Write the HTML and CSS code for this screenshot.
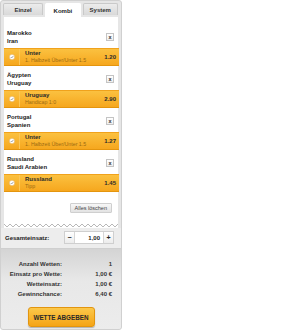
FILE: index.html
```html
<!DOCTYPE html>
<html lang="de">
<head>
<meta charset="utf-8">
<title>Wettschein</title>
<link rel="stylesheet" href="styles.css">
</head>
<body>
<div class="slip">
  <div class="tabs">
    <div class="tab tab-wide">Einzel</div>
    <div class="tab active">Kombi</div>
    <div class="tab">System</div>
  </div>
  <div class="content">
    <div class="match">
      <div class="teams"><div>Marokko</div><div>Iran</div></div>
      <span class="remove">x</span>
    </div>
    <div class="pick">
      <span class="check"><svg viewBox="0 0 8 8" width="6" height="6"><circle cx="4" cy="4" r="3.6" fill="#fff" stroke="#d9a040" stroke-width="0.6"/><path d="M2.3 4.1 L3.5 5.3 L5.8 2.7" fill="none" stroke="#777" stroke-width="0.9"/></svg></span>
      <div class="pick-info"><div class="pick-name">Unter</div><div class="pick-market">1. Halbzeit Über/Unter 1.5</div></div>
      <div class="odds">1.20</div>
    </div>
    <div class="match">
      <div class="teams"><div>Ägypten</div><div>Uruguay</div></div>
      <span class="remove">x</span>
    </div>
    <div class="pick">
      <span class="check"><svg viewBox="0 0 8 8" width="6" height="6"><circle cx="4" cy="4" r="3.6" fill="#fff" stroke="#d9a040" stroke-width="0.6"/><path d="M2.3 4.1 L3.5 5.3 L5.8 2.7" fill="none" stroke="#777" stroke-width="0.9"/></svg></span>
      <div class="pick-info"><div class="pick-name">Uruguay</div><div class="pick-market">Handicap 1:0</div></div>
      <div class="odds">2.90</div>
    </div>
    <div class="match">
      <div class="teams"><div>Portugal</div><div>Spanien</div></div>
      <span class="remove">x</span>
    </div>
    <div class="pick">
      <span class="check"><svg viewBox="0 0 8 8" width="6" height="6"><circle cx="4" cy="4" r="3.6" fill="#fff" stroke="#d9a040" stroke-width="0.6"/><path d="M2.3 4.1 L3.5 5.3 L5.8 2.7" fill="none" stroke="#777" stroke-width="0.9"/></svg></span>
      <div class="pick-info"><div class="pick-name">Unter</div><div class="pick-market">1. Halbzeit Über/Unter 1.5</div></div>
      <div class="odds">1.27</div>
    </div>
    <div class="match">
      <div class="teams"><div>Russland</div><div>Saudi Arabien</div></div>
      <span class="remove">x</span>
    </div>
    <div class="pick">
      <span class="check"><svg viewBox="0 0 8 8" width="6" height="6"><circle cx="4" cy="4" r="3.6" fill="#fff" stroke="#d9a040" stroke-width="0.6"/><path d="M2.3 4.1 L3.5 5.3 L5.8 2.7" fill="none" stroke="#777" stroke-width="0.9"/></svg></span>
      <div class="pick-info"><div class="pick-name">Russland</div><div class="pick-market">Tipp</div></div>
      <div class="odds">1.45</div>
    </div>
    <div class="actions"><span class="clear">Alles löschen</span></div>
  </div>
  <div class="zigzag"><svg viewBox="0 0 114 5" width="114" height="5" preserveAspectRatio="none"><path d="M0 1 L3 4 L6 1 L9 4 L12 1 L15 4 L18 1 L21 4 L24 1 L27 4 L30 1 L33 4 L36 1 L39 4 L42 1 L45 4 L48 1 L51 4 L54 1 L57 4 L60 1 L63 4 L66 1 L69 4 L72 1 L75 4 L78 1 L81 4 L84 1 L87 4 L90 1 L93 4 L96 1 L99 4 L102 1 L105 4 L108 1 L111 4 L114 1" fill="none" stroke="#9a9a9a" stroke-width="0.7"/></svg></div>
  <div class="stake">
    <span class="stake-label">Gesamteinsatz:</span>
    <div class="stepper">
      <span class="step">−</span>
      <span class="amount">1,00</span>
      <span class="step">+</span>
    </div>
  </div>
  <div class="summary">
    <div class="rows">
      <span class="lbl">Anzahl Wetten:</span><span class="val">1</span>
      <span class="lbl">Einsatz pro Wette:</span><span class="val">1,00 €</span>
      <span class="lbl">Wetteinsatz:</span><span class="val">1,00 €</span>
      <span class="lbl">Gewinnchance:</span><span class="val">6,40 €</span>
    </div>
    <div class="submit-wrap"><span class="submit">WETTE ABGEBEN</span></div>
  </div>
</div>
</body>
</html>
```

FILE: styles.css
```css
html, body {
  margin: 0;
  padding: 0;
  background: #fff;
}
body {
  font-family: "Liberation Sans", Arial, sans-serif;
  font-size: 6px;
  color: #222;
}
.slip {
  width: 122px;
  height: 330px;
  box-sizing: border-box;
  background: #e6e6e6;
  border: 1px solid #d0d0d0;
  border-radius: 3px;
  display: flex;
  flex-direction: column;
}
.tabs {
  display: flex;
  gap: 2px;
  padding: 2px 3px 0 2px;
  height: 16px;
  box-sizing: border-box;
}
.tab {
  flex: 35;
  display: flex;
  align-items: center;
  justify-content: center;
  font-weight: bold;
  color: #333;
  background: linear-gradient(#ececec, #d9d9d9);
  border: 1px solid #c9c9c9;
  border-bottom: none;
  border-radius: 2px 2px 0 0;
  margin-bottom: 2px;
}
.tab.tab-wide {
  flex: 40;
}
.tab.active {
  background: #fff;
  border-color: #fff;
  margin-bottom: 0;
  color: #222;
}
.content {
  background: #fff;
  margin: 0 3px 0 3px;
  padding-top: 7px;
  display: flex;
  flex-direction: column;
}
.match {
  display: flex;
  align-items: center;
  justify-content: space-between;
  padding: 5px 4px 3px 3px;
  height: 16px;
}
.teams {
  font-weight: bold;
  line-height: 8px;
}
.remove {
  width: 6px;
  height: 6px;
  border: 1px solid #c4c4c4;
  background: linear-gradient(#fff, #eee);
  display: flex;
  align-items: center;
  justify-content: center;
  font-weight: bold;
  font-size: 5.5px;
  line-height: 5px;
  color: #333;
}
.pick {
  height: 18px;
  box-sizing: border-box;
  display: flex;
  align-items: center;
  background: linear-gradient(#fbc140, #f6a71e);
  border-top: 1px solid #f0a21c;
  border-bottom: 1px solid #e4950e;
  margin-right: -1px;
}
.check {
  width: 15px;
  height: 100%;
  display: flex;
  align-items: center;
  justify-content: center;
  border-right: 1px solid #fbc658;
}
.check svg {
  display: block;
}
.pick-info {
  flex: 1;
  padding-left: 5px;
  line-height: 7px;
}
.pick-name {
  font-weight: bold;
  color: #2a2a2a;
}
.pick-market {
  font-size: 5.3px;
  color: #9c6a12;
}
.odds {
  font-weight: bold;
  color: #2a2a2a;
  padding-right: 3px;
}
.actions {
  display: flex;
  justify-content: flex-end;
  padding: 11px 6px 10px 0;
}
.clear {
  display: block;
  font-size: 5.5px;
  line-height: 8px;
  padding: 0 4px;
  color: #444;
  background: linear-gradient(#f7f7f7, #e3e3e3);
  border: 1px solid #cfcfcf;
  border-radius: 1px;
}
.zigzag {
  margin: 0 3px;
  height: 5px;
  background: #fff;
}
.zigzag svg {
  display: block;
}
.stake {
  display: flex;
  align-items: center;
  justify-content: space-between;
  padding: 3px 7px 4px 4px;
  background: #ededed;
}
.stake-label {
  font-weight: bold;
}
.stepper {
  display: flex;
  height: 11px;
  border: 1px solid #cfcfcf;
  background: #fff;
}
.step {
  width: 9px;
  display: flex;
  align-items: center;
  justify-content: center;
  font-weight: bold;
  font-size: 7px;
  background: linear-gradient(#fff, #ececec);
}
.amount {
  width: 30px;
  display: flex;
  align-items: center;
  justify-content: flex-end;
  padding-right: 3px;
  box-sizing: border-box;
  font-weight: bold;
  border-left: 1px solid #d6d6d6;
  border-right: 1px solid #d6d6d6;
}
.summary {
  flex: 1;
  border-top: 1px solid #cfcfcf;
  background: linear-gradient(#d4d4d4, #e8e8e8 40%, #ececec);
  border-radius: 0 0 3px 3px;
  padding-top: 10px;
  display: flex;
  flex-direction: column;
}
.rows {
  display: grid;
  grid-template-columns: 61px 1fr;
  column-gap: 4px;
  line-height: 10px;
  font-weight: bold;
  padding-right: 9px;
}
.lbl {
  text-align: right;
  color: #333;
}
.val {
  text-align: right;
  color: #333;
}
.submit-wrap {
  display: flex;
  justify-content: center;
  padding-top: 8px;
}
.submit {
  display: flex;
  align-items: center;
  justify-content: center;
  width: 67px;
  height: 20px;
  box-sizing: border-box;
  font-weight: bold;
  font-size: 6.3px;
  color: #2a2a2a;
  background: linear-gradient(#fcc84a, #f5a416);
  border: 1px solid #e2950f;
  border-radius: 3px;
  box-shadow: 0 1px 1px rgba(0,0,0,0.25);
}
```
